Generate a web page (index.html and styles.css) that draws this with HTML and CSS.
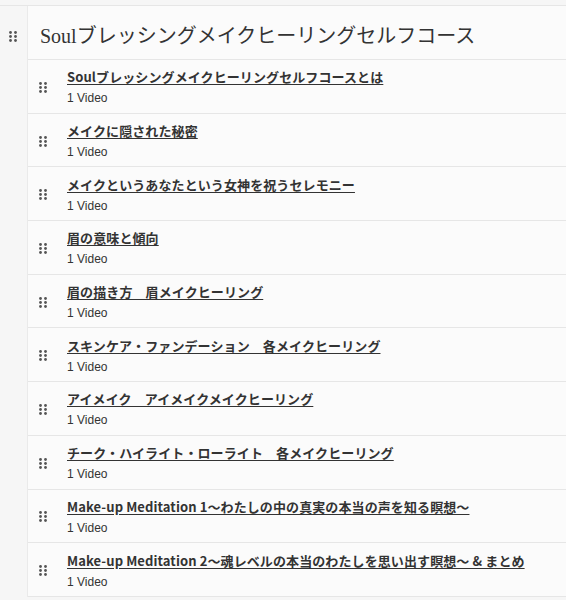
FILE: index.html
```html
<!DOCTYPE html>
<html lang="ja">
<head>
<meta charset="utf-8">
<link rel="stylesheet" href="styles.css">
</head>
<body>
<div class="section">
  <div class="gutter">
    <svg class="handle" width="8" height="11" viewBox="0 0 8 11"><g fill="#555"><circle cx="1.5" cy="1.5" r="1.4"/><circle cx="6.5" cy="1.5" r="1.4"/><circle cx="1.5" cy="5.5" r="1.4"/><circle cx="6.5" cy="5.5" r="1.4"/><circle cx="1.5" cy="9.5" r="1.4"/><circle cx="6.5" cy="9.5" r="1.4"/></g></svg>
  </div>
  <div class="panel">
    <div class="header">Soulブレッシングメイクヒーリングセルフコース</div>
    <ul class="list">
      <li class="row"><svg class="handle" width="8" height="11" viewBox="0 0 8 11"><g fill="#555"><circle cx="1.5" cy="1.5" r="1.4"/><circle cx="6.5" cy="1.5" r="1.4"/><circle cx="1.5" cy="5.5" r="1.4"/><circle cx="6.5" cy="5.5" r="1.4"/><circle cx="1.5" cy="9.5" r="1.4"/><circle cx="6.5" cy="9.5" r="1.4"/></g></svg><div class="info"><a class="title">Soulブレッシングメイクヒーリングセルフコースとは</a><span class="sub">1 Video</span></div></li>
      <li class="row"><svg class="handle" width="8" height="11" viewBox="0 0 8 11"><g fill="#555"><circle cx="1.5" cy="1.5" r="1.4"/><circle cx="6.5" cy="1.5" r="1.4"/><circle cx="1.5" cy="5.5" r="1.4"/><circle cx="6.5" cy="5.5" r="1.4"/><circle cx="1.5" cy="9.5" r="1.4"/><circle cx="6.5" cy="9.5" r="1.4"/></g></svg><div class="info"><a class="title">メイクに隠された秘密</a><span class="sub">1 Video</span></div></li>
      <li class="row"><svg class="handle" width="8" height="11" viewBox="0 0 8 11"><g fill="#555"><circle cx="1.5" cy="1.5" r="1.4"/><circle cx="6.5" cy="1.5" r="1.4"/><circle cx="1.5" cy="5.5" r="1.4"/><circle cx="6.5" cy="5.5" r="1.4"/><circle cx="1.5" cy="9.5" r="1.4"/><circle cx="6.5" cy="9.5" r="1.4"/></g></svg><div class="info"><a class="title">メイクというあなたという女神を祝うセレモニー</a><span class="sub">1 Video</span></div></li>
      <li class="row"><svg class="handle" width="8" height="11" viewBox="0 0 8 11"><g fill="#555"><circle cx="1.5" cy="1.5" r="1.4"/><circle cx="6.5" cy="1.5" r="1.4"/><circle cx="1.5" cy="5.5" r="1.4"/><circle cx="6.5" cy="5.5" r="1.4"/><circle cx="1.5" cy="9.5" r="1.4"/><circle cx="6.5" cy="9.5" r="1.4"/></g></svg><div class="info"><a class="title">眉の意味と傾向</a><span class="sub">1 Video</span></div></li>
      <li class="row"><svg class="handle" width="8" height="11" viewBox="0 0 8 11"><g fill="#555"><circle cx="1.5" cy="1.5" r="1.4"/><circle cx="6.5" cy="1.5" r="1.4"/><circle cx="1.5" cy="5.5" r="1.4"/><circle cx="6.5" cy="5.5" r="1.4"/><circle cx="1.5" cy="9.5" r="1.4"/><circle cx="6.5" cy="9.5" r="1.4"/></g></svg><div class="info"><a class="title">眉の描き方　眉メイクヒーリング</a><span class="sub">1 Video</span></div></li>
      <li class="row"><svg class="handle" width="8" height="11" viewBox="0 0 8 11"><g fill="#555"><circle cx="1.5" cy="1.5" r="1.4"/><circle cx="6.5" cy="1.5" r="1.4"/><circle cx="1.5" cy="5.5" r="1.4"/><circle cx="6.5" cy="5.5" r="1.4"/><circle cx="1.5" cy="9.5" r="1.4"/><circle cx="6.5" cy="9.5" r="1.4"/></g></svg><div class="info"><a class="title">スキンケア・ファンデーション　各メイクヒーリング</a><span class="sub">1 Video</span></div></li>
      <li class="row"><svg class="handle" width="8" height="11" viewBox="0 0 8 11"><g fill="#555"><circle cx="1.5" cy="1.5" r="1.4"/><circle cx="6.5" cy="1.5" r="1.4"/><circle cx="1.5" cy="5.5" r="1.4"/><circle cx="6.5" cy="5.5" r="1.4"/><circle cx="1.5" cy="9.5" r="1.4"/><circle cx="6.5" cy="9.5" r="1.4"/></g></svg><div class="info"><a class="title">アイメイク　アイメイクメイクヒーリング</a><span class="sub">1 Video</span></div></li>
      <li class="row"><svg class="handle" width="8" height="11" viewBox="0 0 8 11"><g fill="#555"><circle cx="1.5" cy="1.5" r="1.4"/><circle cx="6.5" cy="1.5" r="1.4"/><circle cx="1.5" cy="5.5" r="1.4"/><circle cx="6.5" cy="5.5" r="1.4"/><circle cx="1.5" cy="9.5" r="1.4"/><circle cx="6.5" cy="9.5" r="1.4"/></g></svg><div class="info"><a class="title">チーク・ハイライト・ローライト　各メイクヒーリング</a><span class="sub">1 Video</span></div></li>
      <li class="row"><svg class="handle" width="8" height="11" viewBox="0 0 8 11"><g fill="#555"><circle cx="1.5" cy="1.5" r="1.4"/><circle cx="6.5" cy="1.5" r="1.4"/><circle cx="1.5" cy="5.5" r="1.4"/><circle cx="6.5" cy="5.5" r="1.4"/><circle cx="1.5" cy="9.5" r="1.4"/><circle cx="6.5" cy="9.5" r="1.4"/></g></svg><div class="info"><a class="title">Make-up Meditation 1～わたしの中の真実の本当の声を知る瞑想～</a><span class="sub">1 Video</span></div></li>
      <li class="row"><svg class="handle" width="8" height="11" viewBox="0 0 8 11"><g fill="#555"><circle cx="1.5" cy="1.5" r="1.4"/><circle cx="6.5" cy="1.5" r="1.4"/><circle cx="1.5" cy="5.5" r="1.4"/><circle cx="6.5" cy="5.5" r="1.4"/><circle cx="1.5" cy="9.5" r="1.4"/><circle cx="6.5" cy="9.5" r="1.4"/></g></svg><div class="info"><a class="title">Make-up Meditation 2～魂レベルの本当のわたしを思い出す瞑想～ &amp; まとめ</a><span class="sub">1 Video</span></div></li>
    </ul>
  </div>
</div>
</body>
</html>
```
FILE: styles.css
```css
html, body {
  margin: 0;
  padding: 0;
  background: #f6f6f6;
  font-family: "Noto Sans CJK JP", "Noto Sans", sans-serif;
  color: #333;
}
.section {
  margin-top: 5px;
  display: flex;
  border-top: 1px solid #e6e6e6;
}
.gutter {
  width: 27px;
  flex: none;
  display: flex;
  justify-content: center;
  padding-top: 25px;
  padding-right: 1px;
  box-sizing: border-box;
}
.gutter .handle {
  display: block;
}
.panel {
  flex: 1;
  background: #fbfbfb;
  border-left: 1px solid #eaeaea;
}
.header {
  height: 54px;
  box-sizing: border-box;
  border-bottom: 1px solid #e6e6e6;
  padding-left: 12px;
  display: flex;
  align-items: center;
  font-family: "Liberation Serif", "Noto Sans CJK JP", serif;
  font-size: 20px;
  color: #333;
  padding-top: 3px;
}
.list {
  list-style: none;
  margin: 0;
  padding: 0;
}
.row {
  height: 53.7px;
  box-sizing: border-box;
  border-bottom: 1px solid #e6e6e6;
  display: flex;
  align-items: center;
  padding-left: 11px;
  padding-top: 2px;
}
.row .handle {
  flex: none;
  display: block;
  margin-right: 20px;
}
.info {
  display: flex;
  flex-direction: column;
}
.title {
  font-size: 13px;
  font-weight: 700;
  line-height: 18px;
  color: #333;
  text-decoration: underline;
  text-underline-offset: 2px;
  letter-spacing: 0.1px;
}
.sub {
  font-family: "Liberation Sans", "Noto Sans CJK JP", sans-serif;
  font-size: 12px;
  line-height: 16px;
  margin-top: 4px;
  color: #333;
}
```
